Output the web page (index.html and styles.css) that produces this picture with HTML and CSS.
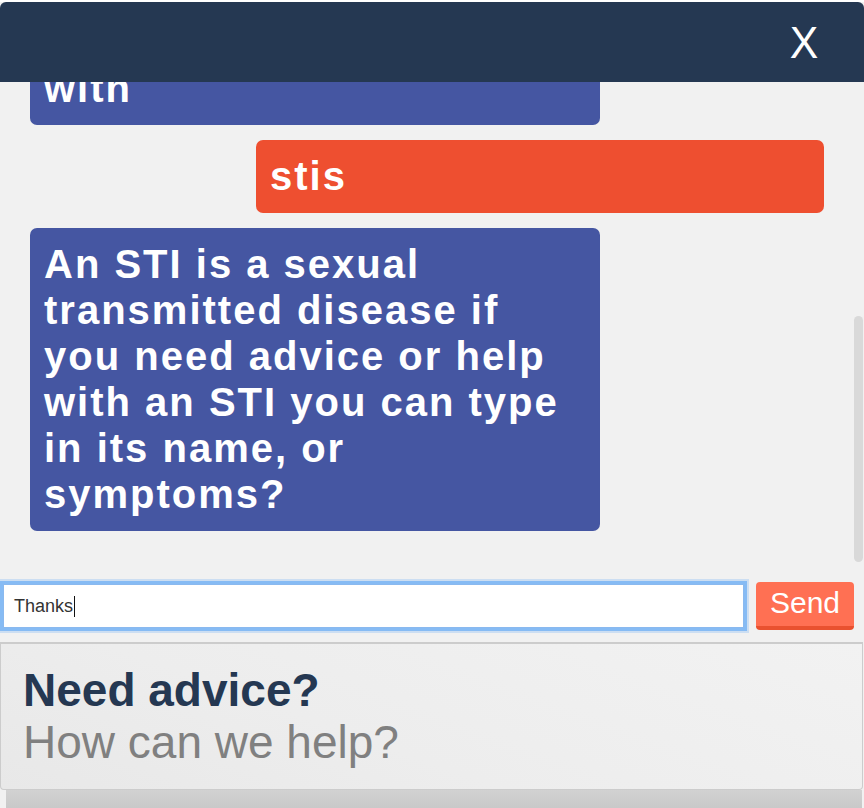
FILE: index.html
```html
<!DOCTYPE html>
<html lang="en">
<head>
<meta charset="utf-8">
<title>Chat</title>
<link rel="stylesheet" href="styles.css">
</head>
<body>
<div class="widget">
  <header class="bar">
    <button class="close" type="button">X</button>
  </header>
  <div class="messages">
    <div class="thread">
      <div class="bubble bot continued">with</div>
      <div class="bubble user">stis</div>
      <div class="bubble bot">An STI is a sexual transmitted disease if you need advice or help with an STI you can type in its name, or symptoms?</div>
    </div>
    <div class="thumb"></div>
  </div>
  <form class="composer">
    <div class="field"><span class="value">Thanks</span><span class="caret"></span></div>
    <button class="send" type="button">Send</button>
  </form>
  <section class="promo">
    <h2 class="promo-title">Need advice?</h2>
    <p class="promo-sub">How can we help?</p>
  </section>
  <div class="band"></div>
</div>
</body>
</html>
```

FILE: styles.css
```css
* { box-sizing: border-box; }
html, body { margin: 0; padding: 0; }
body {
  background: #ffffff;
  font-family: "Liberation Sans", Arial, Helvetica, sans-serif;
  width: 864px;
  height: 808px;
  overflow: hidden;
}
.widget {
  margin-top: 2px;
  background: #f1f1f1;
  height: 806px;
  display: flex;
  flex-direction: column;
}
.bar {
  height: 80px;
  background: #253852;
  border-radius: 6px 6px 0 0;
  display: flex;
  align-items: center;
  justify-content: flex-end;
  padding-right: 45px;
}
.close {
  background: none;
  border: 0;
  padding: 0;
  color: #ffffff;
  font-family: "Liberation Sans", Arial, sans-serif;
  font-size: 45px;
  line-height: 1;
  font-weight: normal;
  transform: scaleX(0.95);
}
.messages {
  position: relative;
  height: 494px;
  overflow: hidden;
}
.thread {
  height: 100%;
  display: flex;
  flex-direction: column;
  justify-content: flex-end;
  gap: 15px;
  padding: 0 40px 45px 30px;
}
.bubble {
  flex: none;
  color: #ffffff;
  font-weight: bold;
  font-size: 40px;
  line-height: 46px;
  letter-spacing: 2px;
  padding: 13px 14px 14px;
  border-radius: 7px;
}
.continued {
  padding-top: 80px;
}
.bot {
  width: 570px;
  background: #4556a2;
  align-self: flex-start;
}
.user {
  width: 568px;
  background: #ee4f30;
  align-self: flex-end;
}
.thumb {
  position: absolute;
  right: 1px;
  top: 234px;
  width: 9px;
  height: 246px;
  background: #d9d9d9;
  border-radius: 5px;
}
.composer {
  margin: 0;
  height: 60px;
  display: flex;
  align-items: center;
  padding: 0 10px 0 3px;
  gap: 12px;
}
.field {
  width: 741px;
  height: 44px;
  background: #ffffff;
  border: 1px solid #8ab9ef;
  box-shadow: 0 0 0 3px #86bbf4, 0 0 0 5px rgba(134, 187, 244, 0.35);
  display: flex;
  align-items: center;
  padding-left: 10px;
  font-size: 18px;
  color: #333333;
}
.caret {
  display: inline-block;
  width: 1px;
  height: 21px;
  background: #111111;
  margin-left: 1px;
}
.send {
  width: 98px;
  height: 48px;
  background: #ff7053;
  border: 0;
  border-bottom: 4px solid #e9512f;
  border-radius: 4px;
  color: #ffffff;
  font-family: "Liberation Sans", Arial, sans-serif;
  font-size: 30px;
  line-height: 1;
  padding: 0 0 2px;
}
.promo {
  margin-top: 6px;
  width: 863px;
  height: 148px;
  border: 1px solid #cccccc;
  border-top-width: 2px;
  border-radius: 0 0 4px 4px;
  background: linear-gradient(200deg, #f2f2f2 0%, #ededed 60%, #e8e8e8 100%);
  padding: 20px 22px;
}
.promo-title, .promo-sub {
  margin: 0;
  font-size: 46px;
  line-height: 52px;
}
.promo-title {
  color: #253852;
  font-weight: bold;
}
.promo-sub {
  color: #808080;
  font-weight: normal;
}
.band {
  margin-left: 6px;
  width: 856px;
  flex: 1;
  background: linear-gradient(#d2d2d2, #c9c9c9);
}
```
